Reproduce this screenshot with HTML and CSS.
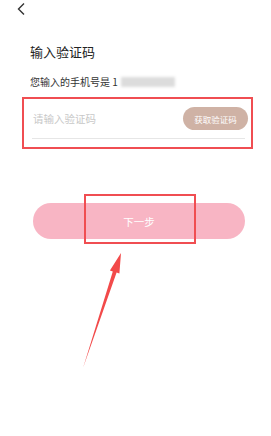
FILE: index.html
```html
<!DOCTYPE html>
<html lang="zh">
<head>
    <meta charset="UTF-8">
    <meta name="viewport" content="width=device-width, initial-scale=1.0">
    <title>输入验证码</title>
    <link rel="stylesheet" href="styles.css">
</head>
<body>
    <div class="topbar">
        <svg class="back" width="10" height="14" viewBox="0 0 10 14">
            <path d="M8 1.5 L2.5 7 L8 12.5" fill="none" stroke="#333" stroke-width="1.4"/>
        </svg>
    </div>
    <div class="content">
        <h1 class="title">输入验证码</h1>
        <p class="phone">您输入的手机号是 1<span class="masked"></span></p>
        <div class="field-box">
            <div class="field">
                <span class="placeholder">请输入验证码</span>
                <span class="code-btn">获取验证码</span>
            </div>
        </div>
        <div class="next-wrap">
            <div class="next-btn">下一步</div>
            <div class="mark"></div>
        </div>
    </div>
    <svg class="arrow" width="50" height="120" viewBox="0 0 50 120">
        <path d="M7 117 L36.8 20.4 L33.9 19.4 L45 2 L43.4 22.6 L40.6 21.6 Z" fill="#f24a4a"/>
    </svg>
</body>
</html>
```

FILE: styles.css
```css
* {
    margin: 0;
    padding: 0;
    box-sizing: border-box;
}

body {
    font-family: "Noto Sans CJK SC", "Noto Sans", sans-serif;
    background-color: #fff;
    width: 271px;
    height: 436px;
    position: relative;
    overflow: hidden;
}

.topbar {
    height: 18px;
    padding: 2px 0 0 16px;
}

.back {
    display: block;
}

.content {
    padding: 24px 0 0 0;
}

.title {
    font-size: 13px;
    font-weight: normal;
    color: #222;
    margin-left: 30px;
    line-height: 20px;
}

.phone {
    font-size: 10px;
    color: #333;
    margin: 12px 0 0 30px;
    line-height: 16px;
    display: flex;
    align-items: center;
}

.masked {
    display: inline-block;
    width: 54px;
    height: 10px;
    margin-left: 3px;
    background-color: #dcdcdc;
    filter: blur(1.5px);
}

.field-box {
    margin: 7px 18px 0 22px;
    height: 52px;
    border: 2px solid #f04e52;
    padding: 0 6px 0 8px;
}

.field {
    height: 40px;
    border-bottom: 1px solid #e6e6e6;
    display: flex;
    align-items: center;
    justify-content: space-between;
    padding-left: 1px;
}

.placeholder {
    font-size: 10.5px;
    color: #c8c8c8;
}

.code-btn {
    width: 65px;
    height: 23px;
    border-radius: 12px;
    background-color: #cfb2a5;
    color: #fff;
    font-size: 8.5px;
    display: flex;
    align-items: center;
    justify-content: center;
    margin-right: -3px;
}

.next-wrap {
    position: relative;
    margin: 54px 26px 0 33px;
}

.next-btn {
    height: 36px;
    border-radius: 18px;
    background-color: #f8b5c4;
    color: #fff;
    font-size: 10.5px;
    display: flex;
    align-items: center;
    justify-content: center;
}

.mark {
    position: absolute;
    left: 51px;
    top: -9px;
    width: 112px;
    height: 50px;
    border: 2px solid #f04e52;
}

.arrow {
    position: absolute;
    left: 76px;
    top: 251px;
}
```
